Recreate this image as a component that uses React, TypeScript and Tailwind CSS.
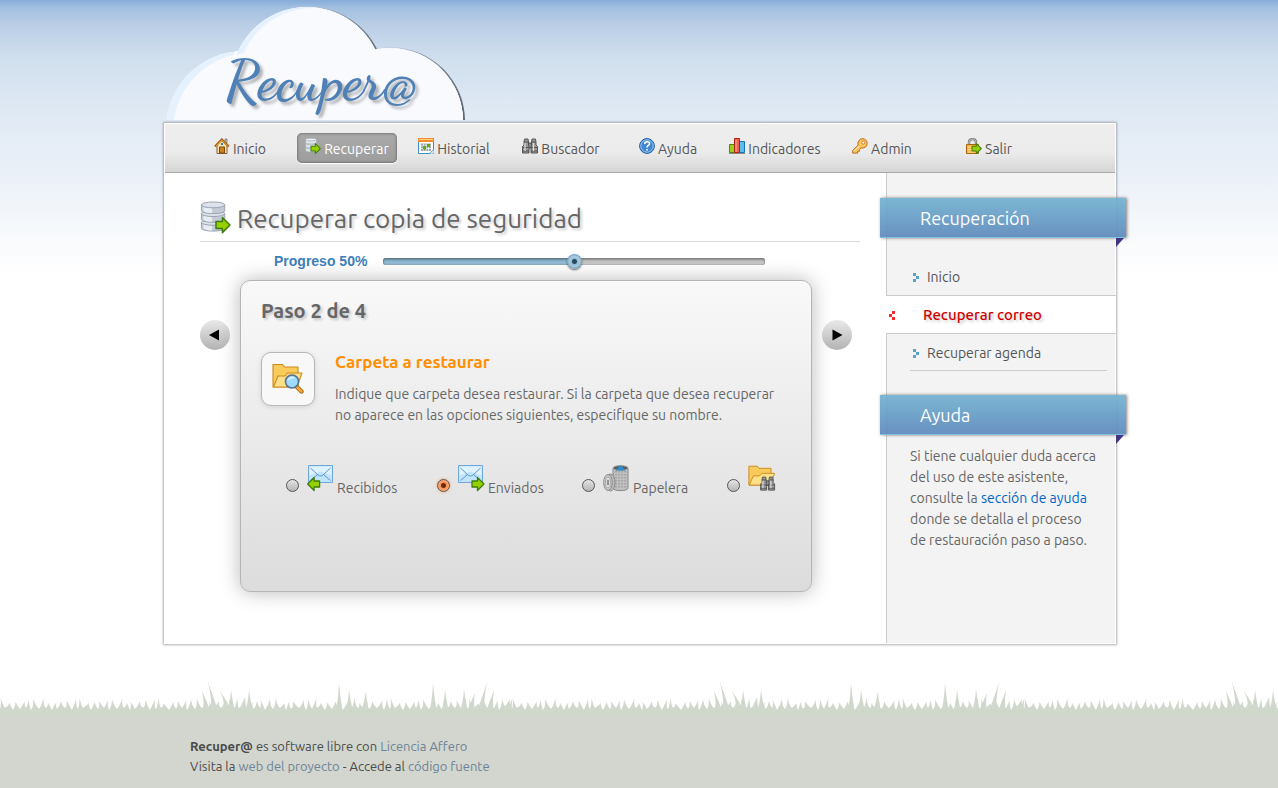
import { useState, type ReactNode } from 'react';

const CLOUD = [
  { cx: 244, cy: 129, r: 78 },
  { cx: 307, cy: 83, r: 76 },
  { cx: 390, cy: 121, r: 73 },
];

function Cloud() {
  return (
    <svg className="block h-[120px] w-[340px]" viewBox="150 0 340 120" aria-hidden="true">
      <defs>
        <clipPath id="cloud-shape">
          {CLOUD.map((c) => (
            <circle key={c.cx} {...c} />
          ))}
        </clipPath>
        <linearGradient id="cloud-edge" x1="0" y1="0" x2="1" y2="0">
          <stop offset="0" stopColor="#dfeafa" />
          <stop offset="0.5" stopColor="#b9c6d6" />
          <stop offset="1" stopColor="#5d6874" />
        </linearGradient>
      </defs>
      {CLOUD.map((c) => (
        <circle key={c.cx} cx={c.cx + 1.5} cy={c.cy} r={c.r + 0.5} fill="url(#cloud-edge)" />
      ))}
      {CLOUD.map((c) => (
        <circle key={c.cx} {...c} fill="#ffffff" />
      ))}
      <g clipPath="url(#cloud-shape)">
        <rect x="150" y="0" width="340" height="120" fill="#e6f1fe" />
        <circle cx="313" cy="84" r="76" fill="#f8fafd" />
        <circle cx="251" cy="131" r="78" fill="#f8fafd" />
        <rect x="254" y="55" width="100" height="65" fill="#f8fafd" />
        <circle cx="390" cy="121" r="73" fill="#f8fafd" />
        <path d="M234 58a76 76 0 0 1 142-10a73 73 0 0 1 87 73" fill="none" stroke="#fff" strokeWidth="2" />
      </g>
    </svg>
  );
}

const GREEN_ARROW = 'M0 3.5h5.5V0L12 6.5L5.5 13V9.500H0z';

function Arrow({ x, y, scale, flip = false }: { x: number; y: number; scale: number; flip?: boolean }) {
  const t = flip ? `translate(${x + 12 * scale} ${y}) scale(${-scale} ${scale})` : `translate(${x} ${y}) scale(${scale})`;
  return <path transform={t} d={GREEN_ARROW} fill="#97d000" stroke="#3f7d0a" strokeWidth="1.3" strokeLinejoin="round" />;
}

function Disks() {
  return (
    <g>
      {[20, 11, 2].map((y) => (
        <g key={y} stroke="#98a1ae" strokeWidth="1">
          <path d={`M1 ${y + 2}v6c0 4 24 4 24 0v-6z`} fill="#c3cbd6" />
          <path d={`M3 ${y + 4}v4c2 2 6 2.500 9 2.500v-5z`} fill="#e8edf3" stroke="none" />
          <ellipse cx="13" cy={y + 2} rx="12" ry="3" fill="#dde3ea" />
        </g>
      ))}
    </g>
  );
}

function DatabaseIcon({ className }: { className: string }) {
  return (
    <svg className={className} viewBox="0 0 32 34" aria-hidden="true">
      <Disks />
      <Arrow x={16} y={17} scale={1.2} />
    </svg>
  );
}

function SmallDatabaseIcon() {
  return (
    <svg className="size-4" viewBox="0 0 16 16" aria-hidden="true">
      {[9.5, 5.5, 1.5].map((y) => (
        <g key={y} stroke="#9aa4af" strokeWidth=".6">
          <path d={`M.500 ${y}v3c0 2 11 2 11 0v-3z`} fill="#dbe2e9" />
          <ellipse cx="6" cy={y} rx="5.500" ry="1.300" fill="#eef2f6" />
        </g>
      ))}
      <Arrow x={6} y={5.5} scale={0.78} />
    </svg>
  );
}

function HomeIcon() {
  return (
    <svg className="size-4" viewBox="0 0 16 16" aria-hidden="true">
      <path d="M11 1h2v4h-2z" fill="#c9c9c9" stroke="#777" strokeWidth=".8" />
      <path d="M3 7l4.500-5L13 7v8.500H3z" fill="#fbe3ac" stroke="#7b6340" />
      <path d="M1 8.500L7.800 1.500L14.800 8.500" fill="none" stroke="#a5600f" strokeWidth="2.200" />
      <path d="M2 8L7.800 2L13.800 8" fill="none" stroke="#f5b04a" strokeWidth=".8" />
      <path d="M5.500 15V9h5v6z" fill="#c98522" stroke="#7e4708" />
      <path d="M7 5h2v2H7z" fill="#3279c8" />
    </svg>
  );
}

function CalendarIcon() {
  return (
    <svg className="size-4" viewBox="0 0 16 16" aria-hidden="true">
      <path d="M.5.500h15v15H.500z" fill="#fff" stroke="#3b8fc6" />
      <path d="M0 0h16v4H0z" fill="#f18b2b" />
      <path d="M1 1.500h14" stroke="#ffd08c" />
      <path d="M3 5.500h10V13H3z" fill="#9aa5ab" />
      <path d="M3 8h10M3 10.500h10M5.500 5.500V13M8 5.500V13M10.500 5.500V13" stroke="#fff" strokeWidth=".7" />
      <path d="M5 8h3v3.500H5zM9 6h3v3H9z" fill="#5fa80c" />
      <path d="M11 16l5-5v5z" fill="#dbeaf4" stroke="#3b8fc6" strokeWidth=".7" />
    </svg>
  );
}

function BinocularShape() {
  return (
    <g stroke="#4b4b4b" strokeWidth=".9">
      <path d="M6 5h4v5H6z" fill="#8d8d8d" />
      <path d="M2.500 1h3.500l.5 3v3.500l.5 1v6.500H.500V8.500l1.500-1.500V4z" fill="#999" />
      <path d="M10 1h3.500l.5 3v3l1.500 1.500v6.500H9V8.500l.5-1V4z" fill="#999" />
      <path d="M2 4h4.500M10 4h4M.500 9.500H7M9 9.500h6.500M.500 13H7M9 13h6.500" fill="none" />
      <path d="M3 5v8M11.500 5v8" fill="none" stroke="#e2e2e2" strokeWidth="1.200" />
    </g>
  );
}

function BinocularsIcon() {
  return (
    <svg className="size-4" viewBox="0 0 16 16" aria-hidden="true">
      <BinocularShape />
    </svg>
  );
}

function HelpIcon() {
  return (
    <svg className="size-4" viewBox="0 0 16 16" aria-hidden="true">
      <circle cx="8" cy="8" r="7.400" fill="#3f87d3" stroke="#1f5ca9" />
      <circle cx="8" cy="8" r="6.200" fill="none" stroke="#a9cff3" strokeWidth=".9" />
      <path d="M5.700 6c0-3 4.800-3 4.800-.3C10.500 7.500 8 7.500 8 9.500M8 11v1.600" fill="none" stroke="#fff" strokeWidth="1.600" />
    </svg>
  );
}

function ChartIcon() {
  return (
    <svg className="size-4" viewBox="0 0 16 16" aria-hidden="true">
      <path d="M0 15.500h16" stroke="#888" />
      <path d="M.5 6.500h5v8H.500z" fill="#9bd115" stroke="#4c8708" />
      <path d="M10.500 3.500h5v11h-5z" fill="#5bbcf0" stroke="#1874b5" />
      <path d="M5.500.500h5v14h-5z" fill="#f2604b" stroke="#b91c12" />
      <path d="M7 2v12" stroke="#ffb3a5" />
    </svg>
  );
}

function KeyIcon() {
  return (
    <svg className="size-4" viewBox="0 0 16 16" aria-hidden="true">
      <path
        d="M10.500.700a4.700 4.700 0 0 1 4.700 4.800a4.700 4.700 0 0 1-6 4.400L7.500 11.500v1.700H5.700v1.900H.700v-2.600L6.200 7A4.700 4.700 0 0 1 10.500.700z"
        fill="#fac55f"
        stroke="#b96a17"
      />
      <circle cx="11.300" cy="4.600" r="1.500" fill="#fff" stroke="#b96a17" strokeWidth=".8" />
      <path d="M2 13l5-5" stroke="#ffe7ae" />
    </svg>
  );
}

function LogoutIcon() {
  return (
    <svg className="size-4" viewBox="0 0 16 16" aria-hidden="true">
      <path d="M3 8V4.500c0-4.500 7-4.500 7 0V8" fill="none" stroke="#777" strokeWidth="2.400" />
      <path d="M3 8V4.500c0-4.500 7-4.500 7 0V8" fill="none" stroke="#ddd" strokeWidth=".8" />
      <path d="M.5 6.500h12v9H.500z" fill="#f6b53c" stroke="#a9650e" />
      <path d="M2 9h9M2 11.500h9M2 14h9" stroke="#ffe0a0" />
      <Arrow x={6} y={5.5} scale={0.78} />
    </svg>
  );
}

function FolderShape() {
  return (
    <g stroke="#c98a1c" strokeWidth="1.100" strokeLinejoin="round">
      <path d="M1 24V1.500h9.500L12.500 4H26v20z" fill="#f9cb5b" />
      <path d="M1.500 24L6 13h7l2.500-3H30l-5 14z" fill="#ffe08a" />
    </g>
  );
}

function FolderSearchIcon() {
  return (
    <svg className="h-8 w-8" viewBox="0 0 32 32" aria-hidden="true">
      <FolderShape />
      <path d="M24 23l5.500 5.500" stroke="#8f5a12" strokeWidth="4.200" strokeLinecap="round" />
      <path d="M25 24l4.500 4.500" stroke="#ffa531" strokeWidth="2.600" strokeLinecap="round" />
      <circle cx="20" cy="18.500" r="6.500" fill="#9fdcff" stroke="#56718f" strokeWidth="1.600" />
      <path d="M15.500 17.500c1-3.500 5.500-4.500 7.500-2.500c-3 0-5.500 1-7.500 2.500z" fill="#e9f8ff" />
    </svg>
  );
}

function MailIcon({ sent = false }: { sent?: boolean }) {
  return (
    <svg className="h-7 w-7" viewBox="0 0 28 28" aria-hidden="true">
      <path d={sent ? 'M.5 1.500h24v17H.500z' : 'M1.500 1.500h24v17h-24z'} fill="#bfe4fc" stroke="#6fa6dc" />
      <g transform={sent ? 'translate(-1.500 -.5)' : 'translate(-.5 -.5)'}>
        <path d="M3 3h22v9L14 8L3 12z" fill="#def2ff" />
        <path d="M4 4.500l7.500 7c1.500 1.300 3.500 1.300 5 0l7.500-7M4 17l6.500-5.500M24 17l-6.500-5.500" fill="none" stroke="#5f94cf" />
      </g>
      {sent ? <Arrow x={14} y={13.5} scale={1} /> : <Arrow x={0.6} y={13.5} scale={1} flip />}
    </svg>
  );
}

function TrashIcon() {
  return (
    <svg className="h-7 w-7" viewBox="0 0 28 28" aria-hidden="true">
      <path d="M10 4v20c0 3.500 15 3.500 15 0V4z" fill="#c0c0c0" stroke="#858585" />
      <path d="M13 7v18M16 7v18M19 7v18M22 7v18" stroke="#8e8e8e" strokeDasharray="1.500 1.500" />
      <ellipse cx="17.500" cy="4" rx="7.500" ry="2.400" fill="#5a5a5a" stroke="#aaa" />
      <path d="M12.500 6.500L17.500 1L22.500 6.500z" fill="#2b8fd0" />
      <ellipse cx="7.500" cy="18.500" rx="4.500" ry="8.500" fill="#bcbcbc" stroke="#8a8a8a" />
      <ellipse cx="5" cy="18.500" rx="4.300" ry="8" fill="#c9c9c9" stroke="#8a8a8a" />
      <ellipse cx="5" cy="18.500" rx="2.500" ry="5.500" fill="#dedede" stroke="#999" strokeWidth=".8" />
      <path d="M5 16v5" stroke="#777" strokeWidth="1.500" />
    </svg>
  );
}

function FolderFindIcon() {
  return (
    <svg className="h-7 w-7" viewBox="0 0 30 30" aria-hidden="true">
      <g transform="translate(0 1) scale(.95 .9)">
        <FolderShape />
      </g>
      <g transform="translate(13 13)">
        <BinocularShape />
      </g>
    </svg>
  );
}

function Bullet({ active = false }: { active?: boolean }) {
  return (
    <svg className="h-[9px] w-[6px] shrink-0" viewBox="0 0 6 9" shapeRendering="crispEdges" aria-hidden="true">
      {active ? (
        <path d="M3 0h3v3H3zM0 3h3v3H0zM3 6h3v3H3z" fill="#f52a2a" />
      ) : (
        <path d="M0 0h3v3H0zM3 3h3v3H3zM0 6h3v3H0z" fill="#55a3cc" />
      )}
    </svg>
  );
}

const TALL_BLADES = [
  [202, 19, 206], [208, 10, 214], [220, 19, 227], [231, 18, 231], [245, 25, 243], [249, 18, 249],
  [339, 11, 339], [349, 18, 349], [366, 19, 365], [433, 11, 433], [445, 18, 445], [464, 17, 464],
  [475, 21, 471], [487, 10, 481], [494, 18, 490], [510, 27, 507],
];

function grassPath() {
  let d = 'M0 44V37';
  for (let i = 0, x = 0; x < 508; i++) {
    const step = 5 + ((i * 7) % 4);
    const tip = 26 + ((i * 5) % 6);
    const lean = ((i * 3) % 5) - 2;
    const end = Math.min(x + step, 512);
    const mid = x + step / 2;
    d += `Q${mid - 1} 34 ${mid + lean} ${tip}Q${mid + 1} 34 ${end} ${36 + ((i * 11) % 3)}`;
    x = end;
  }
  d += 'L512 37V44z';
  for (const [tx, ty, bx] of TALL_BLADES) {
    d += `M${bx - 4} 39Q${bx - 1} 32 ${tx} ${ty}Q${bx + 2} 32 ${bx + 4} 39z`;
  }
  return d;
}

function Grass() {
  return (
    <svg className="block h-11 w-full" aria-hidden="true">
      <defs>
        <pattern id="grass" width="512" height="44" patternUnits="userSpaceOnUse">
          <path d={grassPath()} fill="#d0d8cc" />
        </pattern>
      </defs>
      <rect width="100%" height="44" fill="url(#grass)" />
    </svg>
  );
}

const NAV: { label: string; icon: ReactNode; active?: boolean }[] = [
  { label: 'Inicio', icon: <HomeIcon /> },
  { label: 'Recuperar', icon: <SmallDatabaseIcon />, active: true },
  { label: 'Historial', icon: <CalendarIcon /> },
  { label: 'Buscador', icon: <BinocularsIcon /> },
  { label: 'Ayuda', icon: <HelpIcon /> },
  { label: 'Indicadores', icon: <ChartIcon /> },
  { label: 'Admin', icon: <KeyIcon /> },
  { label: 'Salir', icon: <LogoutIcon /> },
];

function Ribbon({ children }: { children: ReactNode }) {
  return (
    <div className="relative -mr-[11px] -ml-[7px]">
      <h2 className="h-10 border-b border-[#7fc0dd] bg-linear-to-b from-[#6eb0cf]/90 to-[#5986bb]/90 pl-10 text-[18px] leading-10 text-white shadow-[1px_0_3px_rgba(60,40,40,0.6)]">
        {children}
      </h2>
      <svg className="absolute top-full right-[2px] h-[9px] w-[8px]" viewBox="0 0 8 9" aria-hidden="true">
        <path d="M0 0h8L0 9z" fill="#3f3580" />
      </svg>
    </div>
  );
}

const FOLDERS: { id: string; label?: string; icon: ReactNode }[] = [
  { id: 'recibidos', label: 'Recibidos', icon: <MailIcon /> },
  { id: 'enviados', label: 'Enviados', icon: <MailIcon sent /> },
  { id: 'papelera', label: 'Papelera', icon: <TrashIcon /> },
  { id: 'otra', icon: <FolderFindIcon /> },
];

const ROUND_BUTTON =
  'mt-10 flex size-[30px] shrink-0 items-center justify-center rounded-full bg-linear-to-b from-[#e9e9e9] to-[#b3b3b3]';

export default function App() {
  const [folder, setFolder] = useState('enviados');
  const [progress, setProgress] = useState(50);

  return (
    <div className="flex min-h-screen flex-col bg-white bg-[linear-gradient(to_bottom,#86acd8_0,#a3c0e1_8px,#b9cde6_24px,#cfdeed_55px,#dfe9f4_110px,#eaf0f8_170px,#ffffff_275px)] font-['Ubuntu','Noto_Sans','Open_Sans',sans-serif] text-[14px] text-[#666]">
      <div className="w-full pl-0.5">
        <div className="mx-auto w-full max-w-[952px]">
          <header className="h-[123px]">
            <div className="relative -ml-[14px] w-[340px]">
              <Cloud />
              <h1 className="absolute inset-x-0 top-[45px] pl-[75px] font-['Dancing_Script','Liberation_Serif',serif] text-[56px] leading-[72px] font-bold text-[#4f80b6] [text-shadow:3px_3px_3px_rgba(0,0,0,0.3)]">
                Recuper@
              </h1>
            </div>
          </header>

          <div className="border border-white bg-white shadow-[0_0_2px_1px_rgba(110,110,120,0.55)]">
            <nav className="flex h-[49px] gap-[7px] border-b border-[#aaa] bg-linear-to-b from-[#eeeeee] via-[#ebebeb] via-60% to-[#d5d5d5] pt-[9px] pl-[25px]">
              {NAV.map(({ label, icon, active }) => (
                <a
                  key={label}
                  href="#"
                  className={
                    'flex h-[30px] w-[100px] items-baseline justify-center gap-[3px] rounded-[5px] leading-8 ' +
                    (active
                      ? 'bg-linear-to-b from-[#a9a9a9] to-[#9d9d9d] text-white shadow-[inset_0_0_2px_1px_rgba(90,90,90,0.6),0_1px_1px_#fff]'
                      : 'text-[#555]')
                  }
                >
                  {icon}
                  <span>{label}</span>
                </a>
              ))}
            </nav>

            <div className="flex min-h-[470px]">
              <main className="flex-1 pt-7 pr-[26px] pl-[35px]">
                <div className="flex h-[41px] items-start gap-[5px] border-b border-[#d9d9d9]">
                  <DatabaseIcon className="h-[33px] w-8" />
                  <h2 className="text-[26px] leading-[35px] [text-shadow:2px_2px_3px_rgba(0,0,0,0.2)]">
                    Recuperar copia de seguridad
                  </h2>
                </div>

                <div className="flex h-[38px] items-center gap-4 pl-[74px]">
                  <label
                    htmlFor="progress"
                    className="font-['Liberation_Sans',Arial,sans-serif] text-[14px] font-bold text-[#3f80bb]"
                  >
                    Progreso 50%
                  </label>
                  <input
                    id="progress"
                    type="range"
                    min={0}
                    max={100}
                    value={progress}
                    onChange={(e) => setProgress(Number(e.target.value))}
                    className="h-[7px] w-[382px] appearance-none rounded-[3px] bg-[linear-gradient(to_right,#90b9d2_50%,#c6c6c6_50%)] shadow-[inset_0_2px_2px_rgba(0,0,0,0.3),inset_0_0_1px_rgba(0,0,0,0.7)] [&::-webkit-slider-thumb]:size-[15px] [&::-webkit-slider-thumb]:appearance-none [&::-webkit-slider-thumb]:rounded-full [&::-webkit-slider-thumb]:bg-[radial-gradient(circle,#2f4a5c_2px,#92bcd6_3px,#a9cde2_5px,#7fa9c4_7px)] [&::-webkit-slider-thumb]:shadow-[0_1px_2px_rgba(0,0,0,0.6)]"
                  />
                </div>

                <div className="flex items-start gap-[10px]">
                  <button type="button" aria-label="Paso anterior" className={ROUND_BUTTON}>
                    <svg className="h-3 w-3" viewBox="0 0 12 12" aria-hidden="true">
                      <path d="M0 6L10 .5v11z" fill="#000" />
                    </svg>
                  </button>

                  <form className="min-h-[312px] w-[572px] rounded-[10px] border border-[#b5b5b5] bg-linear-to-b from-[#f9f9f9] to-[#dcdcdc] px-5 pt-[18px] shadow-[0_0_20px_rgba(0,0,0,0.28)]">
                    <h3 className="text-[20px] leading-6 font-bold [text-shadow:2px_2px_3px_rgba(0,0,0,0.2)]">
                      Paso 2 de 4
                    </h3>
                    <div className="mt-[29px] flex gap-5">
                      <div className="flex size-[54px] shrink-0 items-center justify-center rounded-[10px] border border-[#b8b8b8] bg-[#f8f8f8] shadow-[0_1px_5px_rgba(0,0,0,0.12)]">
                        <FolderSearchIcon />
                      </div>
                      <div>
                        <h4 className="text-[17px] leading-5 font-bold text-[#ff8f00]">Carpeta a restaurar</h4>
                        <p className="mt-3 leading-[21px]">
                          Indique que carpeta desea restaurar. Si la carpeta que desea recuperar
                          <br />
                          no aparece en las opciones siguientes, especifique su nombre.
                        </p>
                      </div>
                    </div>
                    <div className="mt-[38px] grid grid-cols-[151px_145px_145px_auto] pl-[25px]">
                      {FOLDERS.map(({ id, label, icon }) => (
                        <label key={id} className="flex h-8 items-end">
                          <input
                            type="radio"
                            name="folder"
                            aria-label={label ?? 'Otra carpeta'}
                            checked={folder === id}
                            onChange={() => setFolder(id)}
                            className="mr-2 mb-1 size-[13px] shrink-0 appearance-none rounded-full border border-[#555] bg-linear-to-b from-[#e5e5e5] to-[#b5b5b5] checked:bg-[radial-gradient(circle,#6b2d0c_0,#6b2d0c_2px,#f2935a_3px,#fbb080_6px)] checked:shadow-[0_0_3px_#ff9a5c]"
                          />
                          <span className="mb-1">{icon}</span>
                          {label && <span className="ml-[2px] leading-4">{label}</span>}
                        </label>
                      ))}
                    </div>
                  </form>

                  <button type="button" aria-label="Paso siguiente" className={ROUND_BUTTON}>
                    <svg className="h-3 w-3" viewBox="0 0 12 12" aria-hidden="true">
                      <path d="M1.500.500L11.500 6L1.500 11.500z" fill="#000" />
                    </svg>
                  </button>
                </div>
              </main>

              <aside className="w-[229px] shrink-0 border-l border-[#ccc] bg-[#f3f3f3] pt-[25px]">
                <Ribbon>Recuperación</Ribbon>
                <ul className="mt-5 mb-6 text-[#555]">
                  <li className="flex h-[37px] items-center gap-2 pt-0.5 pl-[26px]">
                    <Bullet />
                    <a href="#">Inicio</a>
                  </li>
                  <li className="-mr-px -ml-px flex h-[39px] items-center gap-[28px] border-y border-[#ccc] bg-white pt-0.5 pl-[3px] text-[#d00000]">
                    <Bullet active />
                    <a href="#" className="text-[15px] font-medium [text-shadow:2px_2px_3px_rgba(0,0,0,0.2)]">
                      Recuperar correo
                    </a>
                  </li>
                  <li className="mr-[8px] ml-[23px] flex h-[37px] items-center gap-2 border-b border-[#ccc] pt-0.5 pl-[3px]">
                    <Bullet />
                    <a href="#">Recuperar agenda</a>
                  </li>
                </ul>
                <Ribbon>Ayuda</Ribbon>
                <p className="mt-[11px] pr-3 pl-[23px] leading-[21px]">
                  Si tiene cualquier duda acerca
                  <br />
                  del uso de este asistente,
                  <br />
                  consulte la{' '}
                  <a href="#" className="text-[#0066cc]">
                    sección de ayuda
                  </a>
                  <br />
                  donde se detalla el proceso
                  <br />
                  de restauración paso a paso.
                </p>
              </aside>
            </div>
          </div>
        </div>
      </div>

      <footer className="mt-[28px] flex flex-1 flex-col">
        <Grass />
        <div className="w-full flex-1 bg-[#d3d6cf] pt-5 pl-0.5">
          <div className="mx-auto w-full max-w-[952px] pl-[26px] text-[13px] leading-5 text-[#4a4a4a]">
            <p>
              <strong>Recuper@</strong> es software libre con{' '}
              <a href="#" className="text-[#6d8296]">
                Licencia Affero
              </a>
            </p>
            <p>
              Visita la{' '}
              <a href="#" className="text-[#6d8296]">
                web del proyecto
              </a>{' '}
              - Accede al{' '}
              <a href="#" className="text-[#6d8296]">
                código fuente
              </a>
            </p>
          </div>
        </div>
      </footer>
    </div>
  );
}
